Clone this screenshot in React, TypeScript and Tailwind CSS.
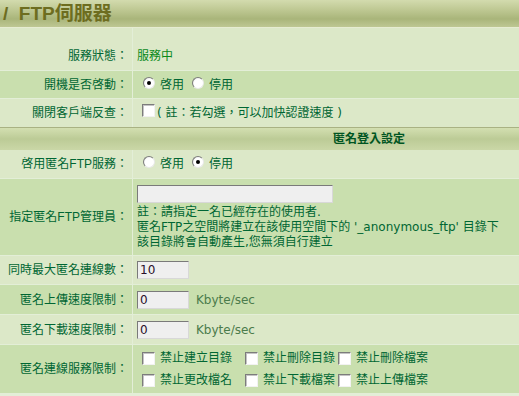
import type { ReactNode } from 'react';

const FONT = "font-['DejaVu_Sans','Noto_Sans_CJK_TC',sans-serif]";

function Radio({ checked }: { checked?: boolean }) {
  return (
    <span className="relative inline-block w-[12px] h-[12px] rounded-full border border-t-[#7c7c7c] border-l-[#7c7c7c] border-b-[#e9e9e9] border-r-[#e9e9e9] bg-[radial-gradient(circle_at_60%_60%,#ffffff_55%,#dcdcdc_100%)] shrink-0">
      {checked && (
        <span className="absolute left-[3px] top-[3px] w-[4px] h-[4px] rounded-full bg-black" />
      )}
    </span>
  );
}

function Check() {
  return (
    <span className="inline-block w-[13px] h-[13px] border border-t-[#7c7c7c] border-l-[#7c7c7c] border-b-[#f2f2f2] border-r-[#f2f2f2] bg-white shadow-[inset_1px_1px_0_#c4c4c4] shrink-0" />
  );
}

function TextBox({ w, value }: { w: number; value?: string }) {
  return (
    <div
      className="h-[18px] bg-[#efefef] border border-t-[#7a7a7a] border-l-[#7a7a7a] border-b-[#d8d8d8] border-r-[#d8d8d8] pl-[2px] text-[12px] leading-[16px] text-[#2a102a] font-['DejaVu_Sans',sans-serif]"
      style={{ width: w }}
    >
      {value}
    </div>
  );
}

function Row({
  label,
  children,
  h,
  dark,
  pt = 0,
}: {
  label: string;
  children: ReactNode;
  h: number;
  dark?: boolean;
  pt?: number;
}) {
  const bg = dark ? 'bg-[#c9dfae]' : 'bg-[#dce8c8]';
  return (
    <div className="flex gap-px" style={{ height: h }}>
      <div
        className={`w-[132px] shrink-0 flex items-center justify-end pr-[4px] text-[12px] text-[#006633] font-['Liberation_Sans','Noto_Sans_CJK_TC',sans-serif] ${bg}`}
        style={{ paddingTop: pt }}
      >
        {label}：
      </div>
      <div className={`flex-1 flex items-center pl-[4px] text-[12px] text-[#006633] ${bg}`} style={{ paddingTop: pt }}>
        {children}
      </div>
    </div>
  );
}

function RadioPair({ on }: { on: boolean }) {
  return (
    <div className="flex items-center">
      <span className="ml-[6px]">
        <Radio checked={on} />
      </span>
      <span className="ml-[5px]">啓用</span>
      <span className="ml-[8px]">
        <Radio checked={!on} />
      </span>
      <span className="ml-[5px]">停用</span>
    </div>
  );
}

function Opt({ text }: { text: string }) {
  return (
    <div className="flex items-center h-[22px]">
      <Check />
      <span className="ml-[5px]">{text}</span>
    </div>
  );
}

export default function App() {
  return (
    <div className={`w-[519px] h-[396px] overflow-hidden bg-[#e3eed7] ${FONT}`}>
      {/* Title bar */}
      <div className="h-[28px] border-b border-[#e6ecd2] bg-[linear-gradient(to_bottom,#d3dbae_0%,#bcc690_40%,#a9b57a_70%,#bec793_100%)] flex items-center pl-[3px]">
        <h1 className="text-[19px] font-bold text-[#6d6d1f] font-['Liberation_Sans','Noto_Sans_CJK_TC',sans-serif] leading-none">
          /&nbsp;&nbsp;FTP伺服器
        </h1>
      </div>

      <div className="flex flex-col gap-px">
        <Row label="服務狀態" h={42} pt={14}>
          <span className="text-[#0a8a1a]">服務中</span>
        </Row>
        <Row label="開機是否啓動" h={27} dark>
          <RadioPair on />
        </Row>
        <Row label="關閉客戶端反查" h={28}>
          <span className="ml-[5px]">
            <Check />
          </span>
          <span className="ml-[2px]">( 註：若勾選，可以加快認證速度 )</span>
        </Row>
      </div>

      {/* Section header */}
      <div className="h-[23px] border-t border-[#a9b283] bg-[linear-gradient(to_bottom,#d3dfb1_0%,#bccb96_50%,#cad7a7_100%)] flex items-center pl-[333px] text-[12px] font-bold text-[#005522]">
        匿名登入設定
      </div>

      <div className="flex flex-col gap-px">
        <Row label="啓用匿名FTP服務" h={28}>
          <RadioPair on={false} />
        </Row>
        <Row label="指定匿名FTP管理員" h={76} dark>
          <div className="flex flex-col self-start pt-[6px]">
            <TextBox w={196} />
            <div className="mt-[2px] leading-[15px] whitespace-nowrap">
              <div>註：請指定一名已經存在的使用者.</div>
              <div>匿名FTP之空間將建立在該使用空間下的 '_anonymous_ftp' 目錄下</div>
              <div>該目錄將會自動產生,您無須自行建立</div>
            </div>
          </div>
        </Row>
        <Row label="同時最大匿名連線數" h={28}>
          <TextBox w={52} value="10" />
        </Row>
        <Row label="匿名上傳速度限制" h={29} dark>
          <TextBox w={52} value="0" />
          <span className="ml-[7px] text-[#4b7b4b] font-['DejaVu_Sans',sans-serif]">Kbyte/sec</span>
        </Row>
        <Row label="匿名下載速度限制" h={29}>
          <TextBox w={52} value="0" />
          <span className="ml-[7px] text-[#4b7b4b] font-['DejaVu_Sans',sans-serif]">Kbyte/sec</span>
        </Row>
        <Row label="匿名連線服務限制" h={48} dark>
          <div className="grid grid-cols-[103px_93px_auto] pl-[5px]">
            <Opt text="禁止建立目錄" />
            <Opt text="禁止刪除目錄" />
            <Opt text="禁止刪除檔案" />
            <Opt text="禁止更改檔名" />
            <Opt text="禁止下載檔案" />
            <Opt text="禁止上傳檔案" />
          </div>
        </Row>
      </div>
    </div>
  );
}
